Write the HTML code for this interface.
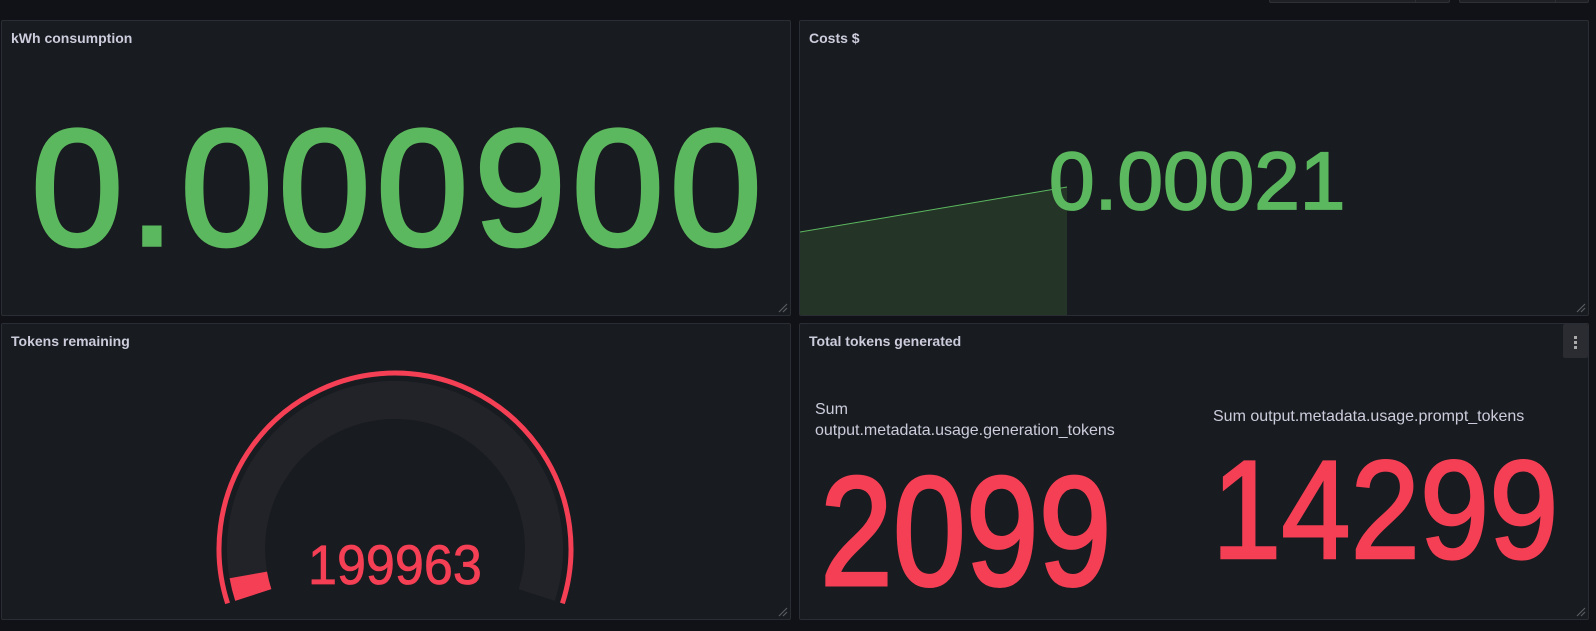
<!DOCTYPE html>
<html><head><meta charset="utf-8"><style>
*{margin:0;padding:0;box-sizing:border-box}
body{width:1596px;height:631px;background:#111217;position:relative;overflow:hidden;font-family:"Liberation Sans",sans-serif}
.p{position:absolute;background:#181b1f;border:1px solid #2a2d33;border-radius:2px;overflow:hidden}
.t{position:absolute;left:9px;top:9px;font-size:14px;font-weight:bold;color:#ccccdc}
.a{position:absolute;white-space:nowrap;line-height:1}
.g{color:#5cb85f;-webkit-text-stroke-color:#5cb85f}.r{color:#f43f55;-webkit-text-stroke-color:#f43f55}
.h{position:absolute;right:2px;bottom:2px}
</style></head><body>
<div style="position:absolute;left:1269px;top:-2px;width:181px;height:5px;border:1px solid #2e3036;background:#1e2025;border-radius:2px"></div>
<div style="position:absolute;left:1415px;top:0;width:1px;height:3px;background:#2e3036"></div>
<div style="position:absolute;left:1459px;top:-2px;width:130px;height:5px;border:1px solid #2e3036;background:#1e2025;border-radius:2px"></div>
<div style="position:absolute;left:1555px;top:0;width:1px;height:3px;background:#2e3036"></div>

<div class="p" style="left:1px;top:20px;width:790px;height:296px">
<div class="t">kWh consumption</div>
<div class="a g" style="left:29px;top:85px;font-size:166px;letter-spacing:5.5px;-webkit-text-stroke-width:3.5px">0.000900</div>
<svg class="h" width="10" height="10"><path d="M1 9L9 1M5 9L9 5" stroke="#5a5d63" stroke-width="1.2"/></svg>
</div>

<div class="p" style="left:799px;top:20px;width:790px;height:296px">
<div class="t">Costs $</div>
<svg style="position:absolute;left:0;top:0" width="790" height="296"><polygon points="0,211 267,166 267,296 0,296" fill="#243528"/><line x1="0" y1="211" x2="267" y2="166" stroke="#5cb85f" stroke-width="1"/></svg>
<div class="a g" style="left:249px;top:120px;font-size:82px;-webkit-text-stroke-width:1.8px">0.00021</div>
<svg class="h" width="10" height="10"><path d="M1 9L9 1M5 9L9 5" stroke="#5a5d63" stroke-width="1.2"/></svg>
</div>

<div class="p" style="left:1px;top:323px;width:790px;height:297px">
<div class="t">Tokens remaining</div>
<svg style="position:absolute;left:-1px;top:-323px" width="790" height="640">
<path d="M252.3,594 A149,149 0 1 1 535.7,594" fill="none" stroke="#222328" stroke-width="38"/>
<path d="M252.3,594 A149,149 0 0 1 247.3,573.9" fill="none" stroke="#f43f55" stroke-width="38"/>
<path d="M226.6,602.4 A176,176 0 1 1 561.4,602.4" fill="none" stroke="#f43f55" stroke-width="5"/>
</svg>
<div class="a r" style="left:306px;top:213px;font-size:56px;transform:scaleX(0.93);transform-origin:left;-webkit-text-stroke-width:0.8px">199963</div>
<svg class="h" width="10" height="10"><path d="M1 9L9 1M5 9L9 5" stroke="#5a5d63" stroke-width="1.2"/></svg>
</div>

<div class="p" style="left:799px;top:323px;width:790px;height:297px">
<div class="t">Total tokens generated</div>
<div style="position:absolute;right:0;top:0;width:25px;height:34px;background:#2a2c31;border-radius:2px"></div>
<div style="position:absolute;right:11px;top:12px;width:3px;height:3px;background:#aaa"></div>
<div style="position:absolute;right:11px;top:17px;width:3px;height:3px;background:#aaa"></div>
<div style="position:absolute;right:11px;top:22px;width:3px;height:3px;background:#aaa"></div>
<div class="a" style="left:15px;top:75px;font-size:16px;color:#ccccdc;line-height:21px">Sum<br>output.metadata.usage.generation_tokens</div>
<div class="a" style="left:413px;top:85px;font-size:16px;color:#ccccdc">Sum output.metadata.usage.prompt_tokens</div>
<div class="a r" style="left:20px;top:130px;font-size:156px;transform:scaleX(0.84);transform-origin:left;-webkit-text-stroke-width:3px">2099</div>
<div class="a r" style="left:412px;top:116px;font-size:140px;transform:scaleX(0.89);transform-origin:left;-webkit-text-stroke-width:2.5px">14299</div>
<svg class="h" width="10" height="10"><path d="M1 9L9 1M5 9L9 5" stroke="#5a5d63" stroke-width="1.2"/></svg>
</div>
</body></html>
